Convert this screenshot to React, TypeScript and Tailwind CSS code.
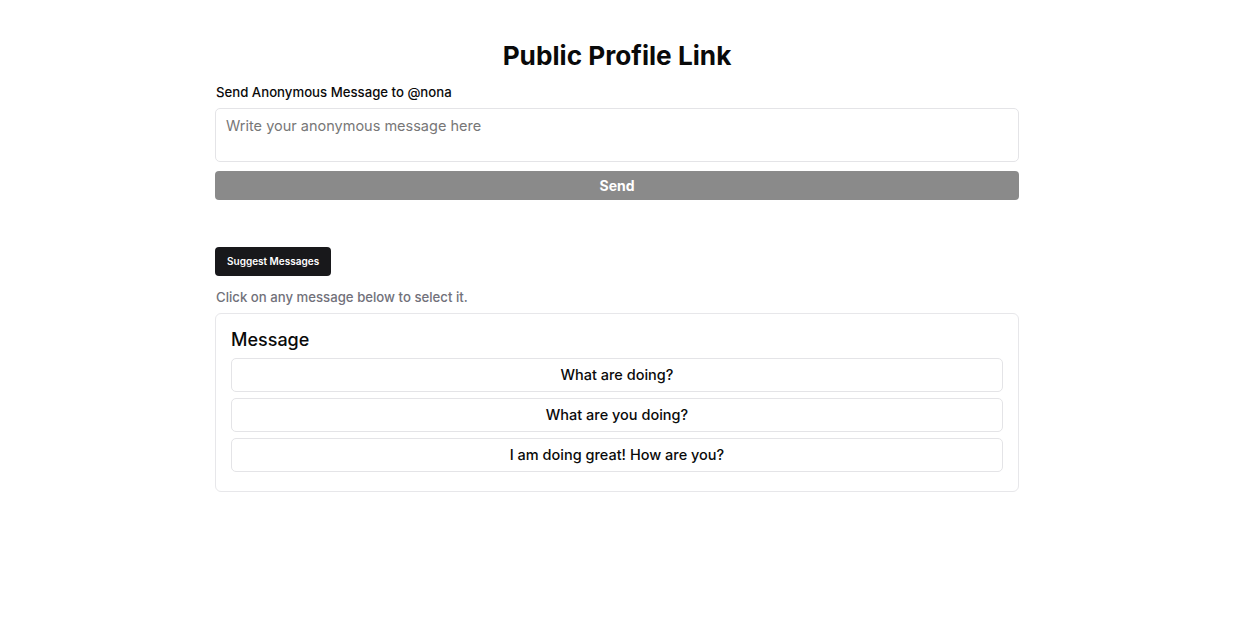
import { useState } from 'react'

const suggestions = ['What are doing?', 'What are you doing?', 'I am doing great! How are you?']

export default function App() {
  const [message, setMessage] = useState('')

  return (
    <main className="min-h-screen bg-white font-['Inter',sans-serif] text-[#0a0a0a]">
      <div className="w-[804px] mx-auto pt-[39px]">
        <h1 className="text-[26.2px] leading-[34px] font-bold text-center mb-[11px]">Public Profile Link</h1>

        <label className="block text-[13.2px] leading-[16px] font-medium mb-[8px] pl-[1px]">
          Send Anonymous Message to @nona
        </label>
        <textarea
          value={message}
          onChange={(e) => setMessage(e.target.value)}
          placeholder="Write your anonymous message here"
          className="block w-full h-[54px] resize-none rounded-[5px] border border-[#e4e4e7] px-[10px] py-[7px] text-[14.5px] leading-[20px] placeholder-[#777] outline-none"
        />
        <button
          disabled={!message.trim()}
          className="mt-[9px] w-full h-[29px] rounded-[4px] bg-[#8a8a8a] text-white text-[14px] font-bold"
        >
          Send
        </button>

        <button className="mt-[47px] h-[29px] px-[12px] rounded-[4px] bg-[#18181b] text-white text-[10px] font-semibold">
          Suggest Messages
        </button>
        <p className="mt-[12px] pl-[1px] text-[13.2px] leading-[18px] font-medium text-[#71717a]">
          Click on any message below to select it.
        </p>

        <div className="mt-[7px] rounded-[6px] border border-[#e7e7ea] px-[15px] pt-[13px] pb-[19px]">
          <h2 className="text-[18px] leading-[26px] font-medium mb-[5px]">Message</h2>
          <div className="flex flex-col gap-[6px]">
            {suggestions.map((s) => (
              <button
                key={s}
                onClick={() => setMessage(s)}
                className="h-[34px] w-full rounded-[5px] border border-[#e4e4e7] text-[14.5px] font-medium"
              >
                {s}
              </button>
            ))}
          </div>
        </div>
      </div>
    </main>
  )
}
